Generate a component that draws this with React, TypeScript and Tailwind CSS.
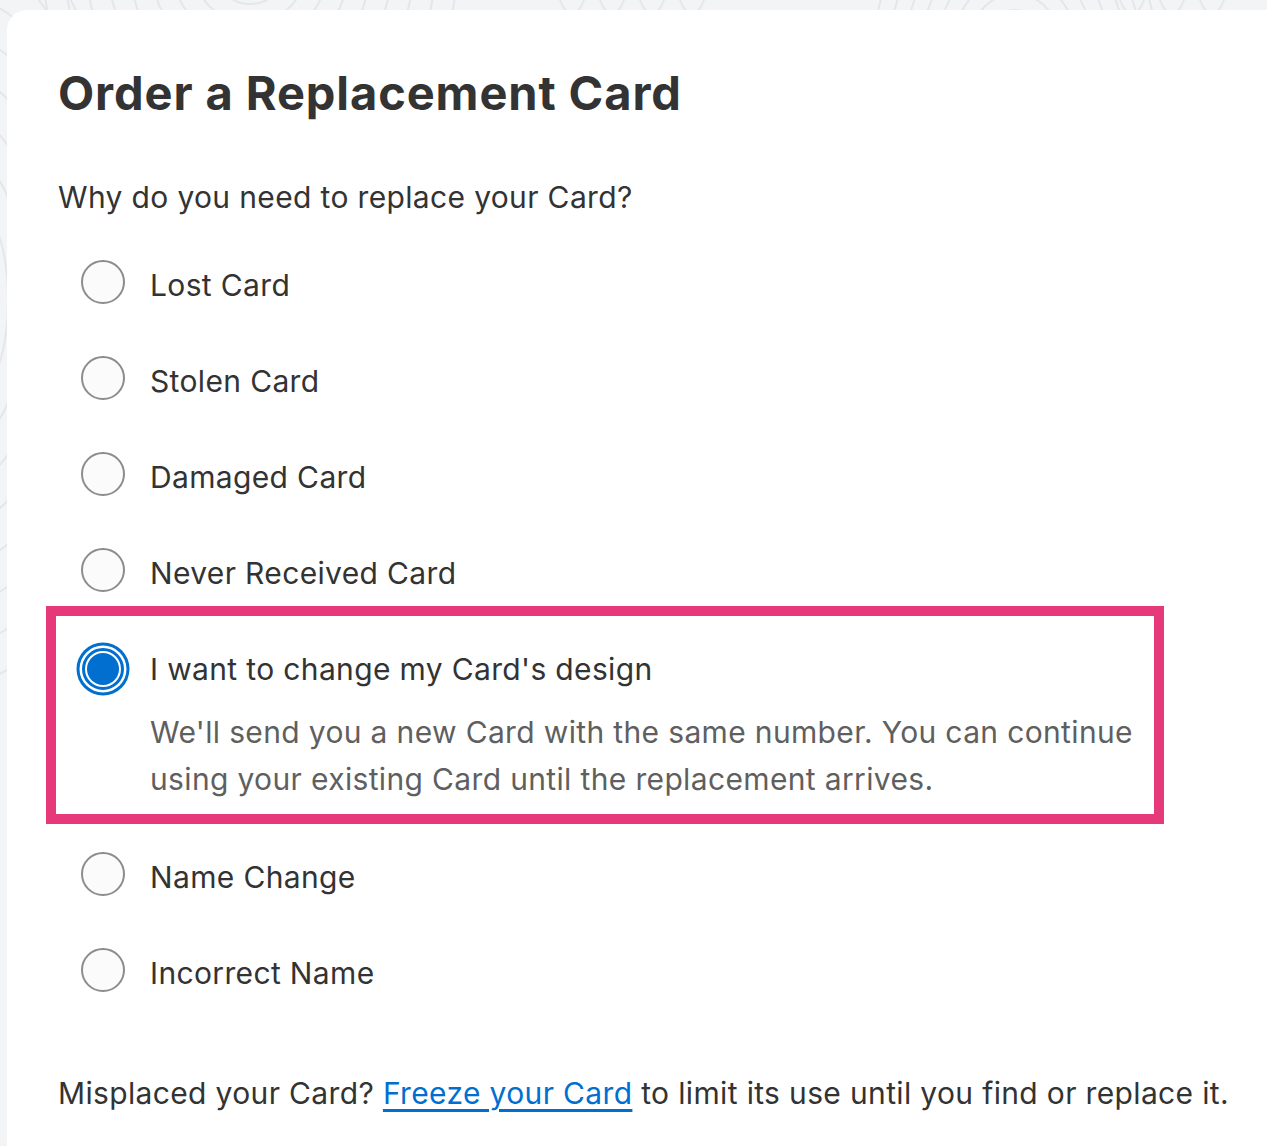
import { useState } from "react";

const options = [
  { id: "lost", label: "Lost Card" },
  { id: "stolen", label: "Stolen Card" },
  { id: "damaged", label: "Damaged Card" },
  { id: "never", label: "Never Received Card" },
  { id: "design", label: "I want to change my Card's design" },
  { id: "name", label: "Name Change" },
  { id: "incorrect", label: "Incorrect Name" },
];

function Radio({ checked }: { checked: boolean }) {
  if (checked) {
    return (
      <span className="flex h-[44px] w-[44px] shrink-0 items-center justify-center">
        <span className="flex h-[42px] w-[42px] items-center justify-center rounded-full border-[3px] border-[#006fcf] bg-white shadow-[0_0_0_2.5px_#fff,0_0_0_5.5px_#006fcf]">
          <span className="h-[32px] w-[32px] rounded-full bg-[#006fcf]" />
        </span>
      </span>
    );
  }
  return <span className="mt-[-6px] h-[44px] w-[44px] shrink-0 rounded-full border-2 border-[#8c8c8c] bg-[#fbfbfb]" />;
}

function Pattern() {
  const rings = [];
  for (let i = 0; i < 9; i++) {
    rings.push(i);
  }
  return (
    <svg className="absolute inset-0 h-full w-full" viewBox="0 0 1267 1146" preserveAspectRatio="none">
      <g fill="none" stroke="#e4e6e8" strokeWidth="2">
        {rings.map((i) => (
          <ellipse key={`a${i}`} cx="250" cy="-20" rx={30 + i * 22} ry={24 + i * 18} />
        ))}
        {rings.map((i) => (
          <ellipse key={`b${i}`} cx="1015" cy="40" rx={12 + i * 16} ry={14 + i * 16} />
        ))}
        {rings.map((i) => (
          <ellipse key={`c${i}`} cx="-30" cy="300" rx={20 + i * 18} ry={60 + i * 40} />
        ))}
        {[560, 600, 640, 680, 1120, 1160, 1200].map((x) => (
          <path key={x} d={`M${x} 0 q 12 30 24 0`} />
        ))}
      </g>
    </svg>
  );
}

export default function App() {
  const [selected, setSelected] = useState("design");

  return (
    <div
      className="relative min-h-[1146px] overflow-hidden bg-[#f3f4f5] pl-[7px] pt-[10px] text-[#333]"
      style={{ fontFamily: "Inter, 'Noto Sans', sans-serif" }}
    >
      <Pattern />
      <div className="relative min-h-[1136px] rounded-tl-[20px] bg-white pl-[51px] pt-[55px] tracking-[0.35px]">
        <h1 className="text-[47px] font-bold leading-[56px] tracking-[0.9px] text-[#333]">Order a Replacement Card</h1>

        <p className="mt-[52px] text-[30px] leading-[48px]">Why do you need to replace your Card?</p>

        <div className="mt-[40px] flex flex-col">
          {options.map((o, idx) => {
            const isSel = o.id === selected;
            if (isSel) {
              return (
                <div
                  key={o.id}
                  className="ml-[-12px] mt-[9px] w-[1118px] border-[10px] border-[#e5397a] pb-[11px] pl-[25px] pt-[29px]"
                >
                  <div className="flex h-[48px] items-center gap-[25px]">
                    <Radio checked />
                    <span className="text-[30px] leading-[48px]">{o.label}</span>
                  </div>
                  <p className="mt-[16px] pl-[69px] text-[30px] leading-[47px] text-[#5f5f5f]">
                    We'll send you a new Card with the same number. You can continue
                    <br />
                    using your existing Card until the replacement arrives.
                  </p>
                </div>
              );
            }
            const prevSel = idx > 0 && options[idx - 1].id === selected;
            return (
              <button
                key={o.id}
                onClick={() => setSelected(o.id)}
                className={`ml-[23px] flex h-[48px] items-center gap-[25px] text-left ${idx === 0 ? "" : prevSel ? "mt-[29px]" : "mt-[48px]"}`}
              >
                <Radio checked={false} />
                <span className="text-[30px] leading-[48px]">{o.label}</span>
              </button>
            );
          })}
        </div>

        <p className="mt-[72px] pb-[29px] text-[30px] leading-[48px]">
          Misplaced your Card?{" "}
          <a href="#" className="text-[#006fcf] underline underline-offset-[5px]">
            Freeze your Card
          </a>{" "}
          to limit its use until you find or replace it.
        </p>
      </div>
    </div>
  );
}
